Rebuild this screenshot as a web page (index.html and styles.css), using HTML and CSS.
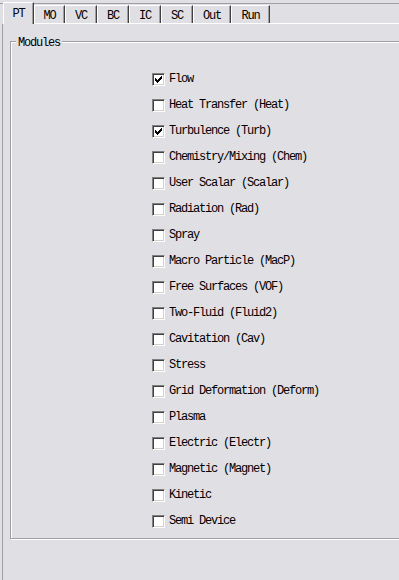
FILE: index.html
```
<!DOCTYPE html>
<html lang="en">
  <head>
    <meta charset="UTF-8" />
    <title>Modules</title>
    <link rel="stylesheet" href="styles.css">
  </head>
  <body>
    <nav class="tabs">
      <div class="tab active w31">PT</div>
      <div class="tab w31">MO</div>
      <div class="tab w32">VC</div>
      <div class="tab w32">BC</div>
      <div class="tab w32">IC</div>
      <div class="tab w32">SC</div>
      <div class="tab w38">Out</div>
      <div class="tab w39">Run</div>
    </nav>
    <main class="panel">
      <section class="group">
        <span class="legend">Modules</span>
        <ul class="modules">
          <li><span class="box checked"></span>Flow</li>
          <li><span class="box"></span>Heat Transfer (Heat)</li>
          <li><span class="box checked"></span>Turbulence (Turb)</li>
          <li><span class="box"></span>Chemistry/Mixing (Chem)</li>
          <li><span class="box"></span>User Scalar (Scalar)</li>
          <li><span class="box"></span>Radiation (Rad)</li>
          <li><span class="box"></span>Spray</li>
          <li><span class="box"></span>Macro Particle (MacP)</li>
          <li><span class="box"></span>Free Surfaces (VOF)</li>
          <li><span class="box"></span>Two-Fluid (Fluid2)</li>
          <li><span class="box"></span>Cavitation (Cav)</li>
          <li><span class="box"></span>Stress</li>
          <li><span class="box"></span>Grid Deformation (Deform)</li>
          <li><span class="box"></span>Plasma</li>
          <li><span class="box"></span>Electric (Electr)</li>
          <li><span class="box"></span>Magnetic (Magnet)</li>
          <li><span class="box"></span>Kinetic</li>
          <li><span class="box"></span>Semi Device</li>
        </ul>
      </section>
    </main>
    <script>
      // draw the classic pixel check mark into ticked boxes
      document.querySelectorAll(".box.checked").forEach((box) => {
        box.innerHTML =
          '<svg width="7" height="7" viewBox="0 0 7 7" shape-rendering="crispEdges">' +
          '<path d="M0 2h1v3H0zM1 3h1v3H1zM2 4h1v3H2zM3 3h1v3H3zM4 2h1v3H4zM5 1h1v3H5zM6 0h1v3H6z" fill="#000"/></svg>';
      });
    </script>
  </body>
</html>
```
FILE: styles.css
```
* {
  box-sizing: border-box;
  margin: 0;
  padding: 0;
}
html,
body {
  height: 100%;
}
body {
  background: #e0dfe3;
  color: #000;
  font-family: "Liberation Mono", "DejaVu Sans Mono", monospace;
  font-size: 12px;
  letter-spacing: -1.2px;
  overflow: hidden;
  display: flex;
  flex-direction: column;
}
.tabs {
  display: flex;
  align-items: flex-end;
  height: 23px;
  padding-left: 3px;
  background: linear-gradient(#a0a0a0, #a0a0a0) 0 3px / 100% 1px no-repeat;
  position: relative;
  z-index: 1;
}
.tab {
  height: 18px;
  display: flex;
  align-items: center;
  justify-content: center;
  padding-top: 2px;
  background: #e0dfe3;
  border-top: 1px solid #fff;
  border-left: 1px solid #fff;
  border-right: 1px solid #404040;
  box-shadow: inset -1px 0 #a0a0a0;
}
.tab.active {
  height: 22px;
  margin-bottom: -1px;
  padding-top: 0;
}
.w31 { width: 31px; }
.w32 { width: 32px; }
.w38 { width: 38px; }
.w39 { width: 39px; }
.panel {
  flex: 1;
  margin-left: 2px;
  border-top: 1px solid #fff;
  border-left: 1px solid #a0a0a0;
  padding: 17px 0 0 7px;
  overflow: hidden;
}
.group {
  position: relative;
  width: calc(100% + 10px);
  border: 1px solid #a0a0a0;
  box-shadow: inset 1px 1px #fff, 1px 1px #fff;
  padding: 24px 0 4px 141px;
}
.legend {
  position: absolute;
  top: -6px;
  left: 5px;
  padding: 0 2px;
  line-height: 14px;
  background: #e0dfe3;
}
.modules {
  list-style: none;
}
.modules li {
  display: flex;
  align-items: center;
  gap: 4px;
  height: 26px;
}
.box {
  flex: none;
  width: 13px;
  height: 13px;
  display: grid;
  place-content: center;
  background: #fff;
  border: 1px solid;
  border-color: #808080 #fff #fff #808080;
  box-shadow: inset 1px 1px #404040, inset -1px -1px #d4d0c8;
}
.box svg {
  display: block;
}
```
